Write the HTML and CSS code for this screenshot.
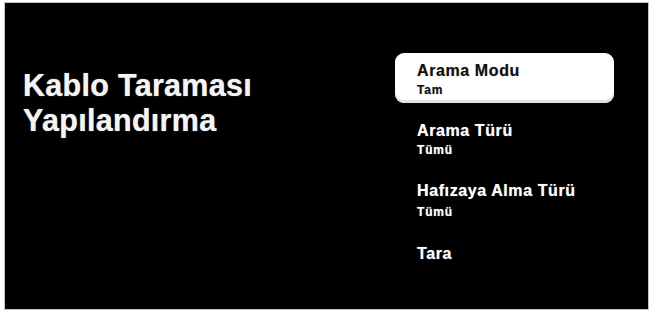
FILE: index.html
```html
<!DOCTYPE html>
<html lang="tr">
<head>
<meta charset="utf-8">
<title>Kablo Taraması Yapılandırma</title>
<link rel="stylesheet" href="styles.css">
</head>
<body>
<div class="screen">
  <div class="heading">
    <h1 class="title">Kablo Taraması<br>Yapılandırma</h1>
  </div>
  <ul class="menu">
    <li class="item selected">
      <div class="label">Arama Modu</div>
      <div class="value">Tam</div>
    </li>
    <li class="item">
      <div class="label">Arama Türü</div>
      <div class="value">Tümü</div>
    </li>
    <li class="item">
      <div class="label">Hafızaya Alma Türü</div>
      <div class="value wide">Tümü</div>
    </li>
    <li class="item last">
      <div class="label">Tara</div>
    </li>
  </ul>
</div>
</body>
</html>
```
FILE: styles.css
```css
html, body {
  margin: 0;
  padding: 0;
  background: #ffffff;
}
body {
  padding: 2px 2px 2px 4px;
  font-family: "Liberation Sans", Arial, sans-serif;
}
.screen {
  box-sizing: border-box;
  width: 645px;
  height: 308px;
  border: 1px solid #c4c4c4;
  background: #000000;
  display: flex;
  justify-content: space-between;
}
.heading {
  padding: 65px 0 0 18px;
}
.title {
  margin: 0;
  color: #f4f4f4;
  font-size: 30.5px;
  font-weight: bold;
  line-height: 35px;
  letter-spacing: 0.3px;
  text-shadow: 0 0 1px rgba(255, 255, 255, 0.7);
}
.menu {
  list-style: none;
  margin: 50px 34px 0 0;
  padding: 0;
  width: 219px;
  display: flex;
  flex-direction: column;
  gap: 10px;
}
.item {
  box-sizing: border-box;
  height: 50px;
  padding: 8px 10px 0 22px;
  color: #ffffff;
  border-radius: 9px;
  font-weight: bold;
  text-shadow: 0 0 1px rgba(255, 255, 255, 0.6);
}
.item.selected {
  background: #ffffff;
  color: #111111;
  text-shadow: 0 0 1px rgba(0, 0, 0, 0.4);
  box-shadow: inset 0 -3px 0 #e2e2e2;
}
.item.last {
  padding-top: 11px;
}
.label {
  font-size: 16px;
  line-height: 19px;
  letter-spacing: 0.6px;
}
.value {
  margin-top: 2px;
  font-size: 12px;
  line-height: 16px;
  letter-spacing: 0.8px;
}
.value.wide {
  margin-top: 4px;
}
```
